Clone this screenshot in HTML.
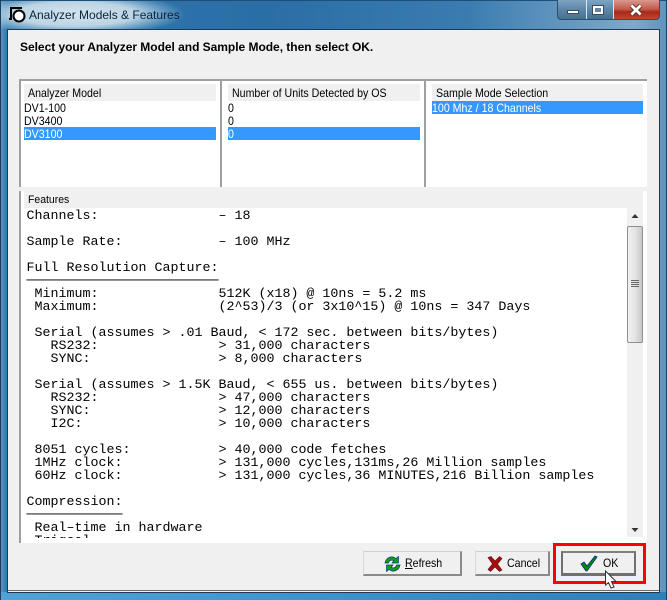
<!DOCTYPE html>
<html><head><meta charset="utf-8"><style>
html,body{margin:0;padding:0;width:667px;height:600px;overflow:hidden;background:#fff}
.a{position:absolute}
#root{position:relative;width:667px;height:600px;overflow:hidden;font-family:"Liberation Sans",sans-serif;color:#000}
.h{position:absolute;background:#f0f0f0;font-size:12px;height:17px;line-height:18px;white-space:nowrap}
.r{position:absolute;height:13px;line-height:14px;font-size:12px;white-space:nowrap;overflow:hidden}
.n{display:inline-block;transform:scaleX(.885);transform-origin:0 50%;text-indent:0}
.s{background:#3399ff;color:#fff}
.ln{position:absolute;background:#a0a0a0}
pre{position:absolute;left:26px;top:208px;margin:0;font:13.33px/13px "Liberation Mono",monospace;color:#000}
.btn{position:absolute;background:#f0f0f0;font-size:12px;box-sizing:border-box;border:1px solid #d8d8d8;border-right:2px solid #8a8a8a;border-bottom:2px solid #8a8a8a;border-top:1px solid #d0d0d0}
</style></head><body><div id="root">
<div class="a" style="left:0;top:0;width:667px;height:600px;background:linear-gradient(90deg,#5a9cc8 0,#2f78b0 1%,#2a6ea6 40%,#3a7cb0 70%,#7fa9c9 95%,#5f93bb 100%)"></div>
<div class="a" style="left:0;top:0;width:190px;height:29px;background:radial-gradient(ellipse 110px 22px at 75px 14px,#d5e4ee 0,#bcd4e4 55%,rgba(150,190,215,.4) 85%,rgba(80,130,175,0) 100%)"></div>
<div class="a" style="left:0;top:0;width:667px;height:1px;background:#1d4f78"></div>
<div class="a" style="left:0;top:592px;width:667px;height:8px;background:linear-gradient(90deg,#4fa3d6,#3c93cc 50%,#2e7fb8);border-bottom:1px solid #123"></div>
<div class="a" style="left:0;top:0;width:1px;height:600px;background:#1d3f5c"></div>
<div class="a" style="left:666px;top:0;width:1px;height:600px;background:#1d3f5c"></div>
<svg class="a" style="left:9px;top:6px" width="17" height="17" viewBox="0 0 17 17"><path d="M2 12V2H13" fill="none" stroke="#000" stroke-width="2"/><path d="M0 13H3" stroke="#000" stroke-width="2"/><circle cx="10" cy="10" r="5.5" fill="#fff" stroke="#000" stroke-width="2"/></svg>
<div class="a" style="left:29px;top:8px;font-size:12px;line-height:15px;white-space:nowrap;color:#06243c">Analyzer Models &amp; Features</div>
<div class="a" style="left:557px;top:0;width:103px;height:20px;box-sizing:border-box;border:1px solid #2d4f6c;border-top:0;border-radius:0 0 4px 4px;background:linear-gradient(#7ea4c2,#5e86a8 50%,#45708f);overflow:hidden">
<div class="a" style="left:28px;top:0;width:1px;height:20px;background:#dbe6ee"></div>
<div class="a" style="left:55px;top:0;width:1px;height:20px;background:#dbe6ee"></div>
<div class="a" style="left:56px;top:0;width:46px;height:20px;background:linear-gradient(#d9988c,#c25c4c 45%,#a9281a 60%,#c24a38)"></div>
<div class="a" style="left:9px;top:10px;width:10px;height:2px;background:#fff;border:1px solid #3a4d60;box-sizing:content-box"></div>
<div class="a" style="left:35px;top:6px;width:6px;height:4px;border:2px solid #fff;outline:1px solid #3a4d60;background:#5f86a6"></div>
</div>
<svg class="a" style="left:629px;top:4px" width="14" height="12" viewBox="0 0 14 12"><path d="M2.500 1.500L11.500 10.500M11.500 1.500L2.500 10.500" stroke="#4a2a25" stroke-width="4.500"/><path d="M2.500 1.500L11.500 10.500M11.500 1.500L2.500 10.500" stroke="#fff" stroke-width="2.800"/></svg>

<div class="a" style="left:7px;top:29px;width:653px;height:564px;background:#1f3a52"></div>
<div class="a" style="left:8px;top:30px;width:651px;height:562px;background:#f0f0f0"></div>
<div class="a" style="left:8px;top:590px;width:651px;height:1px;background:#6a6a6a"></div>

<div class="a" style="left:20px;top:40px;font-size:12px;font-weight:bold;line-height:14px;white-space:nowrap;letter-spacing:-.03px;color:#000">Select your Analyzer Model and Sample Mode, then select OK.</div>

<div class="a" style="left:20px;top:81px;width:627px;height:106px;background:#fff"></div>
<div class="ln" style="left:19px;top:79px;width:628px;height:2px"></div>
<div class="ln" style="left:19px;top:79px;width:2px;height:108px"></div>
<div class="ln" style="left:220px;top:81px;width:2px;height:106px"></div>
<div class="ln" style="left:424px;top:81px;width:2px;height:106px"></div>

<div class="h" style="left:24px;top:84px;width:192px;padding-left:0"><span class="n" style="margin-left:4px">Analyzer Model</span></div>
<div class="r" style="left:24px;top:101px;width:192px"><span class="n">DV1-100</span></div>
<div class="r" style="left:24px;top:114px;width:192px"><span class="n">DV3400</span></div>
<div class="r s" style="left:24px;top:127px;width:192px"><span class="n">DV3100</span></div>

<div class="h" style="left:228px;top:84px;width:192px"><span class="n" style="margin-left:4px">Number of Units Detected by OS</span></div>
<div class="r" style="left:228px;top:101px;width:192px"><span class="n">0</span></div>
<div class="r" style="left:228px;top:114px;width:192px"><span class="n">0</span></div>
<div class="r s" style="left:228px;top:127px;width:192px"><span class="n">0</span></div>

<div class="h" style="left:432px;top:84px;width:211px"><span class="n" style="margin-left:4px">Sample Mode Selection</span></div>
<div class="r s" style="left:432px;top:101px;width:211px"><span class="n">100 Mhz / 18 Channels</span></div>

<div class="a" style="left:20px;top:191px;width:627px;height:352px;background:#fff"></div>
<div class="ln" style="left:19px;top:191px;width:2px;height:352px"></div>
<div class="h" style="left:24px;top:191px;width:619px;font-size:11px"><span class="n" style="margin-left:4px;transform:scaleX(.95)">Features</span></div>
<div class="a" style="left:24px;top:208px;width:603px;height:330px;overflow:hidden">
<pre style="left:2.500px;top:2px">Channels:               – 18

Sample Rate:            – 100 MHz

Full Resolution Capture:
────────────────────────
 Minimum:               512K (x18) @ 10ns = 5.2 ms
 Maximum:               (2^53)/3 (or 3x10^15) @ 10ns = 347 Days

 Serial (assumes &gt; .01 Baud, &lt; 172 sec. between bits/bytes)
   RS232:               &gt; 31,000 characters
   SYNC:                &gt; 8,000 characters

 Serial (assumes &gt; 1.5K Baud, &lt; 655 us. between bits/bytes)
   RS232:               &gt; 47,000 characters
   SYNC:                &gt; 12,000 characters
   I2C:                 &gt; 10,000 characters

 8051 cycles:           &gt; 40,000 code fetches
 1MHz clock:            &gt; 131,000 cycles,131ms,26 Million samples
 60Hz clock:            &gt; 131,000 cycles,36 MINUTES,216 Billion samples

Compression:
────────────
 Real–time in hardware
 Trigsal</pre></div>

<div class="a" style="left:627px;top:208px;width:16px;height:329px;background:#f0f0f0"></div>
<svg class="a" style="left:627px;top:208px" width="16" height="329" viewBox="0 0 16 329"><path d="M4.500 10L8 6L11.500 10Z" fill="#333"/><path d="M4.500 320L8 324L11.500 320Z" fill="#333"/></svg>
<div class="a" style="left:627px;top:226px;width:16px;height:117px;box-sizing:border-box;border:1px solid #8e8f8f;border-radius:2px;background:linear-gradient(90deg,#f1f1f1,#e4e4e4 50%,#c8c8c8)"></div>
<div class="a" style="left:631px;top:280px;width:8px;height:1px;background:#666;box-shadow:0 2px 0 #666,0 4px 0 #666,0 6px 0 #666"></div>

<div class="btn" style="left:363px;top:551px;width:99px;height:25px"></div>
<svg class="a" style="left:383px;top:555px" width="19" height="18" viewBox="0 0 19 18"><path d="M2 8C3 3 7 1.500 10 2L13 3.500L15.500 1.500V8H9L11 5.500C8 4.500 6 5.500 5.500 8Z" fill="#12a012" stroke="#003a80" stroke-width=".7"/><path d="M17 10C16 15 12 16.500 9 16L6 14.500L3.500 16.500V10H10L8 12.500C11 13.500 13 12.500 13.500 10Z" fill="#12a012" stroke="#003a80" stroke-width=".7"/></svg>
<div class="a" style="left:405px;top:556px;font-size:12px;line-height:14px;white-space:nowrap"><span class="n"><u>R</u>efresh</span></div>

<div class="btn" style="left:475px;top:551px;width:75px;height:25px"></div>
<svg class="a" style="left:487px;top:556px" width="16" height="16" viewBox="0 0 16 16"><path d="M1 1.500L4 0.500L8 5L12.500 0.500L15 2.500L10.500 8L15 14L12.500 15.500L8 11L3.500 15.500L1 13.500L5.500 8Z" fill="#a80f0f" stroke="#5a1010" stroke-width=".6"/></svg>
<div class="a" style="left:507px;top:556px;font-size:12px;line-height:14px;white-space:nowrap"><span class="n">Cancel</span></div>

<div class="a" style="left:553px;top:543px;width:93px;height:41px;box-sizing:border-box;border:3px solid #ff0000"></div>
<div class="a" style="left:561px;top:551px;width:75px;height:25px;box-sizing:border-box;background:#f0f0f0;border:2px solid #707070;border-top-color:#808080;border-bottom-width:3px"></div>
<svg class="a" style="left:580px;top:554px" width="18" height="18" viewBox="0 0 18 18"><path d="M1 10L4 8L7 12L15 2L17 3L7 17H6Z" fill="#088808" stroke="#002a80" stroke-width=".8"/></svg>
<div class="a" style="left:603px;top:556px;font-size:12px;line-height:14px;white-space:nowrap"><span class="n">OK</span></div>
<svg class="a" style="left:604px;top:570px" width="14" height="20" viewBox="0 0 14 20"><path d="M1.500 1L1.500 15L4.500 12.500L7 18L10 17L7.500 11.500L12 11.500Z" fill="#fff" stroke="#333" stroke-width="1"/></svg>
</div></body></html>
